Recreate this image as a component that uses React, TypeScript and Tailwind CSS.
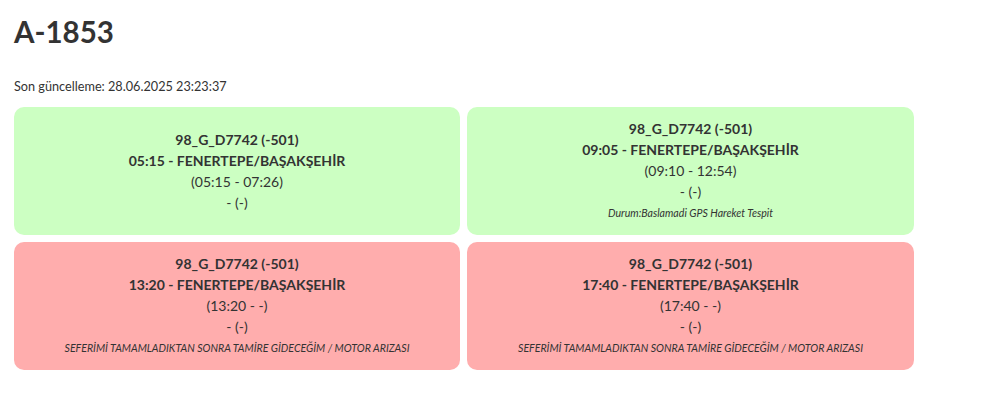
import React from "react";

type Trip = {
  code: string;
  title: string;
  range: string;
  extra: string;
  note?: string;
  ok: boolean;
};

const trips: Trip[] = [
  { code: "98_G_D7742 (-501)", title: "05:15 - FENERTEPE/BAŞAKŞEHİR", range: "(05:15 - 07:26)", extra: "- (-)", ok: true },
  { code: "98_G_D7742 (-501)", title: "09:05 - FENERTEPE/BAŞAKŞEHİR", range: "(09:10 - 12:54)", extra: "- (-)", note: "Durum:Baslamadi GPS Hareket Tespit", ok: true },
  { code: "98_G_D7742 (-501)", title: "13:20 - FENERTEPE/BAŞAKŞEHİR", range: "(13:20 - -)", extra: "- (-)", note: "SEFERİMİ TAMAMLADIKTAN SONRA TAMİRE GİDECEĞİM / MOTOR ARIZASI", ok: false },
  { code: "98_G_D7742 (-501)", title: "17:40 - FENERTEPE/BAŞAKŞEHİR", range: "(17:40 - -)", extra: "- (-)", note: "SEFERİMİ TAMAMLADIKTAN SONRA TAMİRE GİDECEĞİM / MOTOR ARIZASI", ok: false },
];

export default function App() {
  return (
    <div className="min-h-[412px] bg-white px-[14px] pt-[12px] text-[#333333] [font-family:Lato,'Noto_Sans',sans-serif]">
      <h1 className="text-[29.5px] font-bold leading-[40px]">A-1853</h1>
      <p className="mt-[26px] text-[12.7px] leading-[16px]">Son güncelleme: 28.06.2025 23:23:37</p>
      <div className="mt-[13px] grid grid-cols-[446px_447px] auto-rows-[128px] gap-x-[7px] gap-y-[7px]">
        {trips.map((t, i) => (
          <div
            key={i}
            className={`flex flex-col items-center justify-center rounded-[10px] text-center ${t.ok ? "bg-[#ccffc2]" : "bg-[#ffadad]"}`}
          >
            <div className="text-[14px] font-bold leading-[21px]">{t.code}</div>
            <div className="text-[14px] font-bold leading-[21px]">{t.title}</div>
            <div className="text-[14px] leading-[21px]">{t.range}</div>
            <div className="text-[14px] leading-[21px]">{t.extra}</div>
            {t.note && <div className="text-[10.6px] italic leading-[22px]">{t.note}</div>}
          </div>
        ))}
      </div>
    </div>
  );
}
